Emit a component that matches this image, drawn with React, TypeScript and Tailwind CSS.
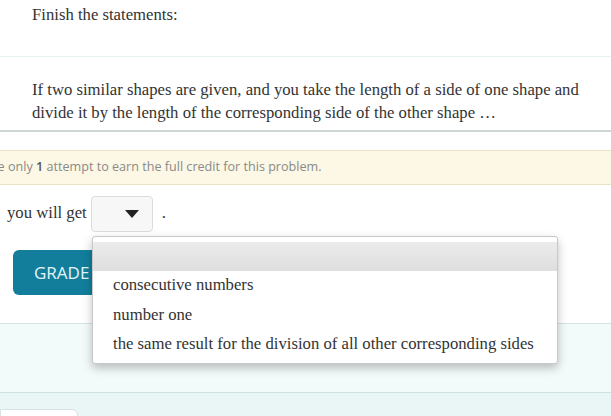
import type { ReactElement } from 'react'

const serif = "font-['Liberation_Serif',_'Times_New_Roman',_serif]"
const sans = "font-['Open_Sans',_'Noto_Sans',_sans-serif]"

const options = ['consecutive numbers', 'number one', 'the same result for the division of all other corresponding sides']

export default function App(): ReactElement {
  return (
    <div className={`relative h-[416px] w-[611px] overflow-hidden bg-white text-[#333] ${serif}`}>
      <div className="h-[57px] border-b border-[#e8f1f1] px-8 pt-[5px] text-[16.7px] leading-[20px]">
        Finish the statements:
      </div>
      <div className="h-[75px] border-b-2 border-[#cfd6d6] pl-8 pr-[20px] pt-[21px] text-[16.7px] leading-[23px]">
        If two similar shapes are given, and you take the length of a side of one shape and divide it by the length
        of the corresponding side of the other shape …
      </div>

      <div
        className={`mt-[18px] flex h-[35px] items-center overflow-hidden whitespace-nowrap border-y border-[#ece3c6] bg-[#fcf8e5] text-[12.6px] text-[#8a8a8a] ${sans}`}
      >
        <span className="-ml-[49px]">
          You have only <b className="font-semibold text-[#555]">1</b> attempt to earn the full credit for this problem.
        </span>
      </div>

      <div className="flex h-[63px] items-start pl-[7px] pt-[11px]">
        <span className="pt-[7px] text-[16.7px] leading-[20px]">you will get</span>
        <div className="ml-[4px] flex h-[36px] w-[62px] items-center justify-end rounded-[4px] border border-[#dcdcdc] bg-[#f7f7f7] pr-[13px]">
          <svg width="14" height="8" viewBox="0 0 14 8">
            <path d="M0 0h14L7 8z" fill="#222" />
          </svg>
        </div>
        <span className="ml-[9px] pt-[7px] text-[16.7px] leading-[20px]">.</span>
      </div>

      <div className="h-[76px] border-b border-[#d3e4e4] pl-[13px] pt-[2px]">
        <button
          className={`h-[45px] rounded-[6px] bg-[#127e9c] pl-[21px] pr-[40px] text-left text-[17px] text-[#e4f5fa] ${sans}`}
        >
          GRADE
        </button>
      </div>

      <div className="h-[69px] border-b border-[#cfe3e3] bg-[#f3fafa]" />
      <div className="h-[26px] bg-[#eaf6f6] pt-[16px]">
        <div className="h-[20px] w-[78px] rounded-tr-[6px] border border-[#d8e2e2] bg-white" />
      </div>

      <div className="absolute left-[92px] top-[236px] h-[128px] w-[466px] rounded-[3px] border border-[#c8c8c8] bg-white pt-[5px] shadow-[0_4px_10px_rgba(0,0,0,0.25)]">
        <div className="h-[29px] bg-gradient-to-b from-[#ececec] to-[#dedede]" />
        <ul className="-mt-[1px] text-[16.7px] leading-[29.5px] text-[#333]">
          {options.map((o) => (
            <li key={o} className="pl-[20px]">
              {o}
            </li>
          ))}
        </ul>
      </div>
    </div>
  )
}
